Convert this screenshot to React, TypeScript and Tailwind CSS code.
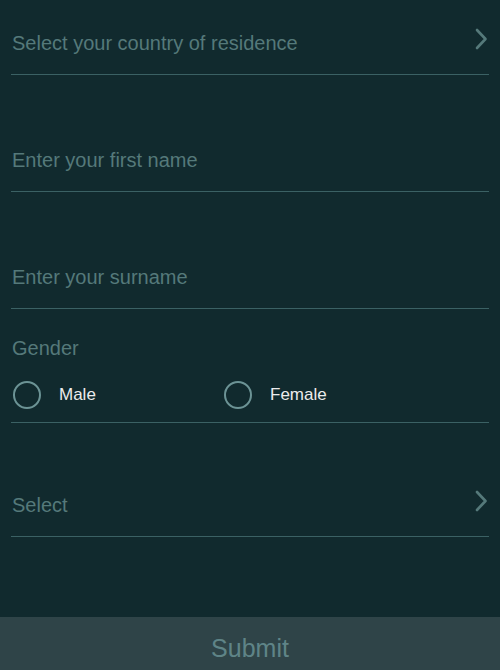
import { ReactNode } from "react";

function Chevron() {
  return (
    <svg width="14" height="22" viewBox="0 0 14 22" fill="none" className="mr-[1px] -mt-[8px]">
      <path d="M3 2l8.5 9L3 20" stroke="#55797a" strokeWidth="2.6" strokeLinecap="round" strokeLinejoin="round" />
    </svg>
  );
}

function Field({ label, chevron, className }: { label: string; chevron?: boolean; className: string }) {
  return (
    <div className={`mx-[11px] h-[65px] pt-[1px] border-b border-[#3b6164] flex items-center justify-between ${className}`}>
      <span className="pl-[1px] text-[20px] text-[#55797a]">{label}</span>
      {chevron && <Chevron />}
    </div>
  );
}

function Radio({ children }: { children: ReactNode }) {
  return (
    <label className="flex items-center w-[211px]">
      <span className="ml-[2px] w-[28px] h-[28px] rounded-full border-[2.5px] border-[#6c9395]" />
      <span className="ml-[18px] text-[17px] text-[#ececec]">{children}</span>
    </label>
  );
}

export default function App() {
  return (
    <div
      className="w-[500px] h-[670px] overflow-hidden bg-[#112a2e] flex flex-col"
      style={{ fontFamily: '"Liberation Sans", Arial, sans-serif' }}
    >
      <Field label="Select your country of residence" chevron className="mt-[10px]" />
      <Field label="Enter your first name" className="mt-[52px]" />
      <Field label="Enter your surname" className="mt-[52px]" />

      <div className="mx-[11px] h-[114px] border-b border-[#3b6164] flex flex-col">
        <span className="mt-[27px] pl-[1px] text-[20px] leading-[24px] text-[#55797a]">Gender</span>
        <div className="mt-[17px] flex items-center h-[36px]">
          <Radio>Male</Radio>
          <Radio>Female</Radio>
        </div>
      </div>

      <Field label="Select" chevron className="mt-[49px]" />

      <div className="flex-1" />
      <button className="h-[53px] shrink-0 bg-[#2f4448] text-[25px] leading-[30px] pt-[16px] text-[#5f8487] flex items-start justify-center">
        Submit
      </button>
    </div>
  );
}
